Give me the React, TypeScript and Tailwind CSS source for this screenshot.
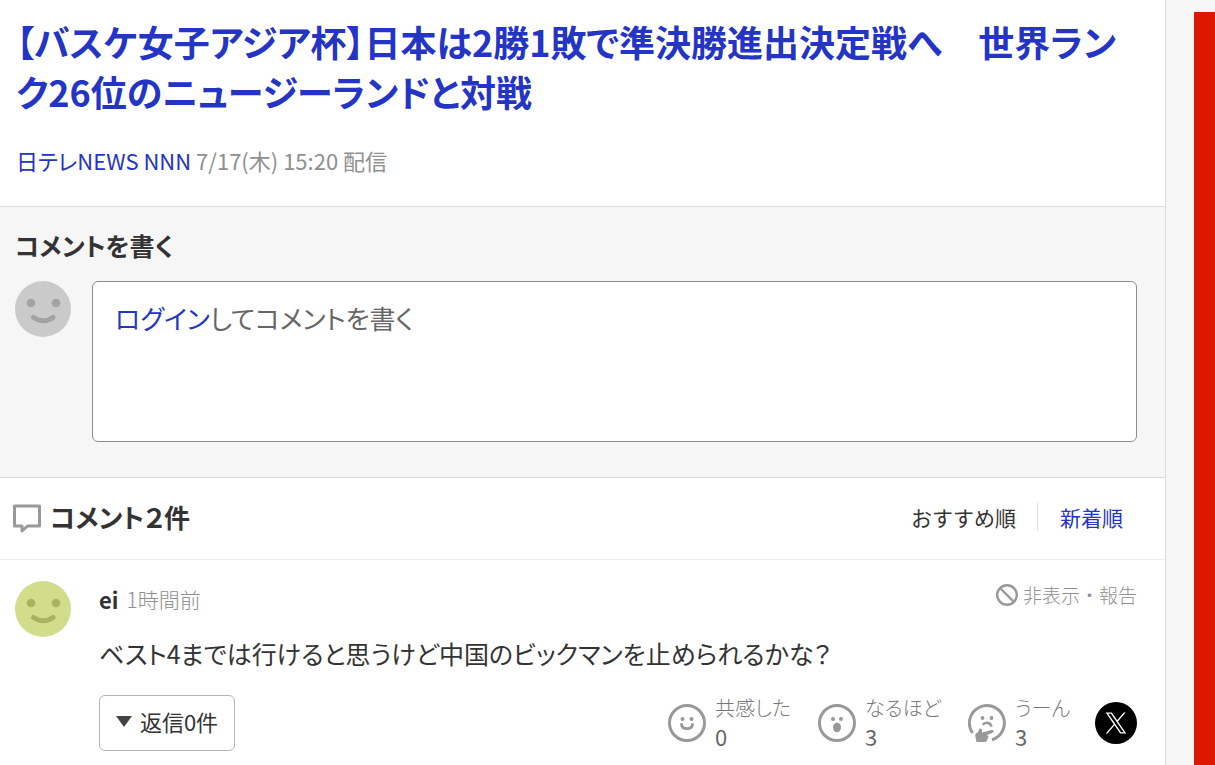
import type { ReactNode } from "react";

type AvatarProps = {
  color: string;
  faceColor: string;
};

type Reaction = {
  label: string;
  count: number;
  icon: ReactNode;
};

const Avatar: React.FC<AvatarProps> = ({ color, faceColor }) => (
  <svg viewBox="0 0 56 56" className="size-14 shrink-0" aria-hidden="true">
    <circle cx="28" cy="28" r="28" fill={color} />
    <circle cx="16" cy="22" r="4.3" fill={faceColor} />
    <circle cx="41" cy="22" r="4.3" fill={faceColor} />
    <path
      d="M18.500 36.500 Q28.500 43 38 36.500"
      fill="none"
      stroke={faceColor}
      strokeWidth="5"
      strokeLinecap="round"
    />
  </svg>
);

const CommentIcon = () => (
  <svg viewBox="0 0 30 32" className="h-8 w-[30px] shrink-0" aria-hidden="true">
    <path
      d="M2.500 5h25v20H15.500L10 30V25H2.500z"
      fill="none"
      stroke="#999"
      strokeWidth="3"
      strokeLinejoin="round"
    />
  </svg>
);

const HideIcon = () => (
  <svg viewBox="0 0 24 24" className="size-6 shrink-0" aria-hidden="true">
    <g fill="none" stroke="#999" strokeWidth="2.4">
      <circle cx="12" cy="12" r="9.8" />
      <path d="M5 5l14 14" />
    </g>
  </svg>
);

const SmileIcon = () => (
  <svg viewBox="0 0 38 38" className="size-[38px] shrink-0" aria-hidden="true">
    <circle cx="19" cy="19" r="17.5" fill="none" stroke="#999" strokeWidth="3" />
    <circle cx="14.5" cy="15" r="2" fill="#999" />
    <circle cx="23.5" cy="15" r="2" fill="#999" />
    <path
      d="M13.500 20.500c.6 5.600 10.400 5.600 11 0"
      fill="none"
      stroke="#999"
      strokeWidth="2.8"
      strokeLinecap="round"
    />
  </svg>
);

const SurprisedIcon = () => (
  <svg viewBox="0 0 38 38" className="size-[38px] shrink-0" aria-hidden="true">
    <circle cx="19" cy="19" r="17.5" fill="none" stroke="#999" strokeWidth="3" />
    <circle cx="15" cy="15" r="2" fill="#999" />
    <circle cx="23" cy="15" r="2" fill="#999" />
    <ellipse cx="19" cy="23.5" rx="4" ry="4.8" fill="#999" />
  </svg>
);

const ThinkingIcon = () => (
  <svg viewBox="0 0 38 38" className="size-[38px] shrink-0" aria-hidden="true">
    <path
      d="M4.500 29A17.500 17.500 0 1 1 24 35.800"
      fill="none"
      stroke="#999"
      strokeWidth="3"
    />
    <circle cx="14.5" cy="14" r="1.9" fill="#999" />
    <circle cx="23.5" cy="14" r="1.9" fill="#999" />
    <path
      d="M15.500 20c2.500-2 6.500-1.600 7.700 1.600"
      fill="none"
      stroke="#999"
      strokeWidth="2.6"
      strokeLinecap="round"
    />
    <path
      d="M11.500 24.500c1.400-.3 2.500.5 2.500 2v2l9.500-2.500c2.300-.5 3 2.200.8 3L19 31l1.500 1.200-1.500 4.300c-.4 1-1 1.300-2 1.400l-6.500.6c-1.300.1-2-.3-2.300-1.400l-.9-5.100c-.2-1.300.2-2.200 1.300-2.900l1.500-1z"
      fill="#999"
    />
  </svg>
);

const XLogo = () => (
  <svg viewBox="0 0 42 42" className="size-[42px]" aria-hidden="true">
    <circle cx="21" cy="21" r="21" fill="#000" />
    <g transform="translate(10.5 10.5) scale(.875)">
      <path
        d="M14.230 10.160 22.970 0h-2.070l-7.590 8.820L7.250 0H.26l9.170 13.340L.26 24h2.070l8.020-9.320L16.750 24h6.990l-9.510-13.840zM11.390 13.460l-.93-1.330L3.070 1.560h3.180l5.970 8.530.93 1.330 7.760 11.090h-3.180l-6.340-9.050z"
        fill="#fff"
      />
    </g>
  </svg>
);

const reactions: Reaction[] = [
  { label: "共感した", count: 0, icon: <SmileIcon /> },
  { label: "なるほど", count: 3, icon: <SurprisedIcon /> },
  { label: "うーん", count: 3, icon: <ThinkingIcon /> },
];

const ArticleHeader = () => (
  <header className="border-b border-[#dcdcdc] pt-4 pr-7 pb-[30px] pl-4">
    <h1 className="text-4xl leading-[50px] font-bold">
      <a href="#article" className="text-[#2434c4]">
        【バスケ女子アジア杯】日本は2勝1敗で準決勝進出決定戦へ　世界ランク26位のニュージーランドと対戦
      </a>
    </h1>
    <p className="mt-7 text-[22px] leading-8 text-[#8f8f8f]">
      <a href="#source" className="text-[#2434c4]">
        日テレNEWS NNN
      </a>{" "}
      7/17(木) 15:20 配信
    </p>
  </header>
);

const CommentForm = () => (
  <section className="border-b border-[#dcdcdc] bg-[#f6f6f6] pt-[18px] pr-7 pb-[35px] pl-[15px]">
    <h2 className="text-[25px] leading-10 font-bold">コメントを書く</h2>
    <div className="mt-4 flex gap-[21px]">
      <Avatar color="#cacaca" faceColor="#a2a2a2" />
      <div className="h-[161px] flex-1 rounded-md border border-[#8c8c8c] bg-white px-[22px] py-4">
        <p className="text-[26px] leading-10 text-[#666]">
          <a href="#login" className="text-[#2434c4]">
            ログイン
          </a>
          してコメントを書く
        </p>
      </div>
    </div>
  </section>
);

const CommentItem = () => (
  <article className="flex gap-7 pt-[21px] pr-7 pb-[14px] pl-[15px]">
    <Avatar color="#d1dd8a" faceColor="#a7b35f" />
    <div className="min-w-0 flex-1">
      <div className="flex h-10 items-start justify-between">
        <p className="flex items-center gap-2 leading-9">
          <span className="text-[22px] font-bold">ei</span>
          <time className="text-[21px] font-light text-[#8f8f8f]">1時間前</time>
        </p>
        <button
          type="button"
          className="flex items-center gap-1 text-[19px] leading-7 font-light text-[#8f8f8f] [font-feature-settings:normal]"
        >
          <HideIcon />
          非表示・報告
        </button>
      </div>
      <p className="mt-3 text-[25px] leading-10">
        ベスト4までは行けると思うけど中国のビックマンを止められるかな？
      </p>
      <div className="mt-[21px] flex items-center justify-between">
        <button
          type="button"
          className="flex h-14 w-[136px] items-center justify-center gap-2 rounded-md border border-[#b5b5b5] pb-1 text-[22px]"
        >
          <svg viewBox="0 0 16 11" className="h-[11px] w-4" aria-hidden="true">
            <path d="M0 0h16L8 11z" fill="#444" />
          </svg>
          返信0件
        </button>
        <div className="flex items-center">
          {reactions.map(({ label, count, icon }) => (
            <button
              key={label}
              type="button"
              className="flex w-[150px] items-center gap-[9px] text-left last-of-type:w-[127px]"
            >
              {icon}
              <span className="flex flex-col pb-[2px]">
                <span className="text-xl leading-7 font-light text-[#777]">
                  {label}
                </span>
                <span className="text-[22px] leading-7 text-[#666]">
                  {count}
                </span>
              </span>
            </button>
          ))}
          <a href="#share" aria-label="X">
            <XLogo />
          </a>
        </div>
      </div>
    </div>
  </article>
);

const App = () => {
  return (
    <div
      lang="ja"
      className="flex min-h-screen bg-[#f6f6f6] font-['Noto_Sans_CJK_JP',sans-serif] text-[#333] [font-feature-settings:'palt']"
    >
      <main className="min-w-0 flex-1 border-r border-[#dcdcdc] bg-white">
        <ArticleHeader />
        <CommentForm />
        <section>
          <div className="flex h-[82px] items-center justify-between border-b border-[#eee] pr-[42px] pb-1 pl-3">
            <h2 className="flex items-center gap-2 text-[26px] font-bold">
              <CommentIcon />
              コメント２件
            </h2>
            <nav className="flex items-center text-[21px] leading-7 [font-feature-settings:normal]">
              <span className="border-r border-[#ddd] pr-[21px]">
                おすすめ順
              </span>
              <a href="#newest" className="pl-[22px] text-[#2434c4]">
                新着順
              </a>
            </nav>
          </div>
          <CommentItem />
        </section>
      </main>
      <aside className="flex w-[49px] pt-3 pl-7">
        <div className="flex-1 bg-[#dc1800]" />
      </aside>
    </div>
  );
};

export default App;
